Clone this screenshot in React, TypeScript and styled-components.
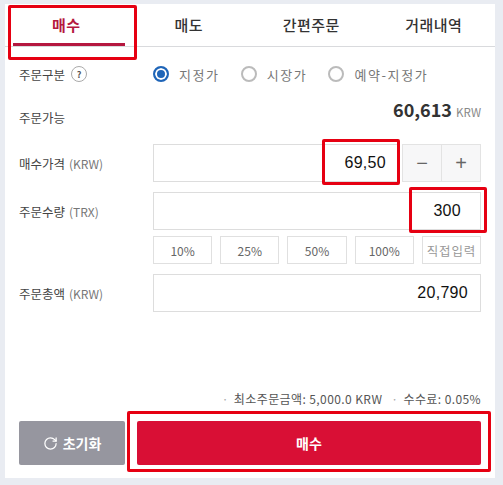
import styled, { createGlobalStyle } from "styled-components";
import { RotateCw } from "lucide-react";

const GlobalStyle = createGlobalStyle`
  html, body {
    margin: 0;
    padding: 0;
    background: #e9ecf2;
    font-family: "Noto Sans CJK KR", "Noto Sans", sans-serif;
  }
`;

const tabs = ["매수", "매도", "간편주문", "거래내역"];
const percents = ["10%", "25%", "50%", "100%"];

const App = () => {
  return (
    <Page>
      <GlobalStyle />
      <Panel>
        <Tabs>
          {tabs.map((t, i) => (
            <Tab key={t} $active={i === 0}>{t}</Tab>
          ))}
        </Tabs>

        <Body>
          <TypeRow>
            <Label>
              주문구분
              <Help>?</Help>
            </Label>
            <Radios>
              <Radio>
                <Dot $on />
                지정가
              </Radio>
              <Radio>
                <Dot />
                시장가
              </Radio>
              <Radio>
                <Dot />
                예약-지정가
              </Radio>
            </Radios>
          </TypeRow>

          <AvailRow>
            <Label>주문가능</Label>
            <Amount>
              60,613 <small>KRW</small>
            </Amount>
          </AvailRow>

          <InputRow>
            <Label>
              매수가격 <Unit>(KRW)</Unit>
            </Label>
            <Field $pad={12}>69,50</Field>
            <Stepper>
              <StepButton>−</StepButton>
              <StepButton>+</StepButton>
            </Stepper>
          </InputRow>

          <InputRow $top={10}>
            <Label>
              주문수량 <Unit>(TRX)</Unit>
            </Label>
            <Field $pad={19}>300</Field>
          </InputRow>

          <PercentRow>
            {percents.map((p) => (
              <Percent key={p}>{p}</Percent>
            ))}
            <Percent $muted>직접입력</Percent>
          </PercentRow>

          <InputRow $top={10}>
            <Label>
              주문총액 <Unit>(KRW)</Unit>
            </Label>
            <Field $pad={12}>20,790</Field>
          </InputRow>

          <Notes>
            <Note>최소주문금액: 5,000.0 KRW</Note>
            <Note>수수료: 0.05%</Note>
          </Notes>

          <Actions>
            <ResetButton>
              <RotateCw size={15} strokeWidth={2} />
              초기화
            </ResetButton>
            <BuyButton>매수</BuyButton>
          </Actions>
        </Body>

        <Mark $x={3} $y={1} $w={129} $h={55} />
        <Mark $x={317} $y={135} $w={78} $h={46} />
        <Mark $x={404} $y={183} $w={78} $h={46} />
        <Mark $x={122} $y={407} $w={364} $h={61} />
      </Panel>
    </Page>
  );
};

export default App;

const Page = styled.div`
  width: 503px;
  height: 485px;
  padding: 4px 8px 7px 5px;
  box-sizing: border-box;
`;

const Panel = styled.div`
  position: relative;
  height: 100%;
  background: #fff;
  display: flex;
  flex-direction: column;
`;

const Tabs = styled.div`
  height: 42px;
  display: flex;
  border-bottom: 1px solid #d9dadd;
`;

const Tab = styled.div<{ $active?: boolean }>`
  position: relative;
  flex: 1;
  height: 42px;
  display: flex;
  align-items: center;
  justify-content: center;
  padding-bottom: 2px;
  box-sizing: border-box;
  font-size: 15px;
  letter-spacing: 0.5px;
  font-weight: ${({ $active }) => ($active ? 700 : 500)};
  color: ${({ $active }) => ($active ? "#b5173f" : "#333")};

  &::after {
    content: "";
    display: ${({ $active }) => ($active ? "block" : "none")};
    position: absolute;
    left: 8px;
    right: 3px;
    bottom: 0;
    height: 3px;
    background: #b5173f;
  }
`;

const Body = styled.div`
  flex: 1;
  display: flex;
  flex-direction: column;
  padding: 0 14px 13px 14px;
`;

const Label = styled.div`
  width: 134px;
  flex: none;
  display: flex;
  align-items: center;
  gap: 4px;
  font-size: 12.5px;
  color: #444;
`;

const Unit = styled.span`
  font-size: 12px;
  color: #777;
`;

const Help = styled.span`
  width: 14px;
  height: 14px;
  margin-left: 2px;
  border: 1px solid #aaa;
  border-radius: 50%;
  display: flex;
  align-items: center;
  justify-content: center;
  font-size: 9px;
  font-weight: 700;
  color: #555;
`;

const TypeRow = styled.div`
  height: 54px;
  display: flex;
  align-items: center;
`;

const Radios = styled.div`
  display: flex;
  gap: 21px;
`;

const Radio = styled.div`
  display: flex;
  align-items: center;
  gap: 10px;
  font-size: 13px;
  letter-spacing: 1.6px;
  color: #777;
`;

const Dot = styled.span<{ $on?: boolean }>`
  width: 16px;
  height: 16px;
  box-sizing: border-box;
  border-radius: 50%;
  border: 2px solid ${({ $on }) => ($on ? "#1f65b8" : "#bbb")};
  background: ${({ $on }) => ($on ? "#1f65b8" : "#fff")};
  box-shadow: ${({ $on }) => ($on ? "inset 0 0 0 2px #fff" : "none")};
`;

const AvailRow = styled.div`
  height: 44px;
  display: flex;
  align-items: center;
  justify-content: space-between;
  margin-top: -6px;
  margin-bottom: 5px;
`;

const Amount = styled.div`
  font-size: 18px;
  font-weight: 700;
  color: #333;
  margin-top: -17px;

  small {
    font-size: 11.5px;
    font-weight: 400;
    color: #888;
  }
`;

const InputRow = styled.div<{ $top?: number }>`
  display: flex;
  height: 38px;
  margin-top: ${({ $top }) => $top ?? 0}px;
`;

const Field = styled.div<{ $pad: number }>`
  flex: 1;
  border: 1px solid #ddd;
  display: flex;
  align-items: center;
  justify-content: flex-end;
  padding-right: ${({ $pad }) => $pad}px;
  font-family: "Liberation Sans", Arial, sans-serif;
  font-size: 16px;
  letter-spacing: 0.3px;
  color: #111;
`;

const Stepper = styled.div`
  width: 79px;
  margin-left: 3px;
  flex: none;
  display: flex;
  border: 1px solid #e3e3e3;
  box-sizing: border-box;
  background: #f7f7f8;
`;

const StepButton = styled.div`
  flex: 1;
  display: flex;
  align-items: center;
  justify-content: center;
  font-family: "Liberation Sans", Arial, sans-serif;
  font-size: 20px;
  color: #666;

  & + & {
    border-left: 1px solid #e3e3e3;
  }
`;

const PercentRow = styled.div`
  display: flex;
  gap: 8px;
  margin-top: 6px;
  margin-left: 134px;
`;

const Percent = styled.div<{ $muted?: boolean }>`
  flex: 1 1 0;
  min-width: 0;
  height: 28px;
  box-sizing: border-box;
  border: 1px solid #e0e0e0;
  display: flex;
  align-items: center;
  justify-content: center;
  white-space: nowrap;
  font-size: ${({ $muted }) => ($muted ? "12.5px" : "12px")};
  letter-spacing: ${({ $muted }) => ($muted ? "0.8px" : "0")};
  color: ${({ $muted }) => ($muted ? "#999" : "#666")};
`;

const Notes = styled.div`
  margin-top: auto;
  margin-bottom: 14px;
  display: flex;
  justify-content: flex-end;
  gap: 9px;
  font-size: 12px;
  letter-spacing: 0.4px;
  color: #555;
`;

const Note = styled.span`
  &::before {
    content: "·";
    color: #aaa;
    margin-right: 5px;
  }
`;

const Actions = styled.div`
  display: flex;
  gap: 12px;
  height: 44px;
`;

const ResetButton = styled.div`
  width: 106px;
  flex: none;
  background: #96969f;
  border-radius: 2px;
  display: flex;
  align-items: center;
  justify-content: center;
  gap: 5px;
  font-size: 14px;
  font-weight: 700;
  color: #fff;
`;

const BuyButton = styled.div`
  flex: 1;
  background: #d90f35;
  border-radius: 2px;
  display: flex;
  align-items: center;
  justify-content: center;
  font-size: 14px;
  font-weight: 700;
  color: #fff;
`;

const Mark = styled.div<{ $x: number; $y: number; $w: number; $h: number }>`
  position: absolute;
  left: ${({ $x }) => $x}px;
  top: ${({ $y }) => $y}px;
  width: ${({ $w }) => $w}px;
  height: ${({ $h }) => $h}px;
  box-sizing: border-box;
  border: 3px solid #e60012;
  border-radius: 2px;
`;
